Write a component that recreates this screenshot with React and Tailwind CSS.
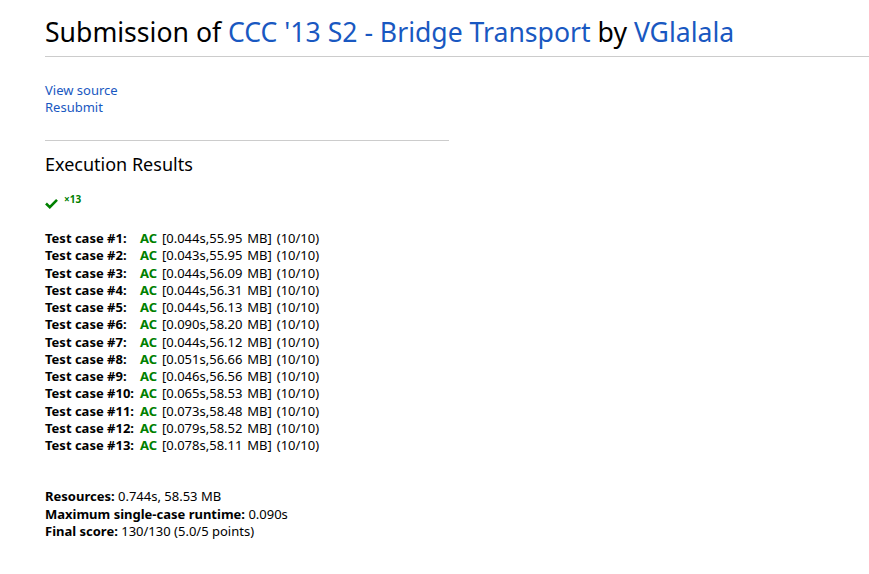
import React from "react";

const cases = [
  ["0.044s", "55.95"],
  ["0.043s", "55.95"],
  ["0.044s", "56.09"],
  ["0.044s", "56.31"],
  ["0.044s", "56.13"],
  ["0.090s", "58.20"],
  ["0.044s", "56.12"],
  ["0.051s", "56.66"],
  ["0.046s", "56.56"],
  ["0.065s", "58.53"],
  ["0.073s", "58.48"],
  ["0.079s", "58.52"],
  ["0.078s", "58.11"],
];

export default function App() {
  return (
    <div
      className="w-[869px] h-[574px] bg-white text-black overflow-hidden"
      style={{ fontFamily: '"Segoe UI", "Noto Sans", "Open Sans", sans-serif' }}
    >
      <div className="pl-[45px]">
        <h1 className="text-[26.6px] leading-[32px] pt-[16px] pb-[8px] font-normal whitespace-nowrap">
          Submission of{" "}
          <a className="text-[#1958c1]">CCC '13 S2 - Bridge Transport</a> by{" "}
          <a className="text-[#1958c1]">VGlalala</a>
        </h1>
        <div className="h-px bg-[#cccccc]" />
      </div>

      <div className="pl-[45px] pt-[25px] text-[13px] leading-[17px]">
        <div>
          <a className="text-[#1958c1]">View source</a>
        </div>
        <div>
          <a className="text-[#1958c1]">Resubmit</a>
        </div>

        <div className="w-[404px] h-px bg-[#cccccc] mt-[24px]" />

        <h2 className="text-[18px] leading-[24px] mt-[11px] font-normal">Execution Results</h2>

        <div className="flex items-start mt-[15px] h-[20px]">
          <svg width="13" height="11" viewBox="0 0 13 11" className="mt-[7px]">
            <path d="M1 5.5 L4.8 9.2 L12 1.8" fill="none" stroke="#008000" strokeWidth="2.6" />
          </svg>
          <span className="text-[10px] leading-[12px] font-bold text-[#008000] ml-[6px] mt-[2px]">×13</span>
        </div>

        <table className="mt-[19px] border-collapse">
          <tbody>
            {cases.map(([t, m], i) => (
              <tr key={i} className="h-[17.25px]">
                <td className="p-0 pr-[6px] font-bold whitespace-nowrap leading-[17px]">Test case #{i + 1}:</td>
                <td className="p-0 leading-[17px] whitespace-nowrap [word-spacing:1.5px]">
                  <span className="font-bold text-[#008000]">AC</span>{" "}
                  <span>[{t},{m} MB]</span> <span>(10/10)</span>
                </td>
              </tr>
            ))}
          </tbody>
        </table>

        <div className="mt-[34px] leading-[17.5px]">
          <div>
            <b>Resources:</b> 0.744s, 58.53 MB
          </div>
          <div>
            <b>Maximum single-case runtime:</b> 0.090s
          </div>
          <div>
            <b>Final score:</b> 130/130 (5.0/5 points)
          </div>
        </div>
      </div>
    </div>
  );
}
